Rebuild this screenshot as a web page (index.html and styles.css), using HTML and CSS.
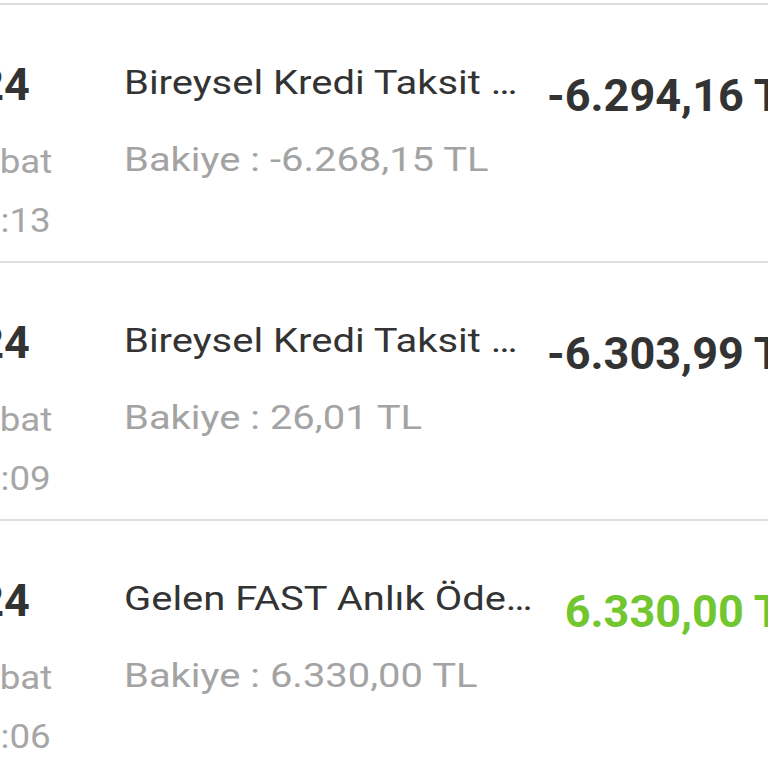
FILE: index.html
```html
<!DOCTYPE html>
<html lang="tr">
<head>
<meta charset="utf-8">
<title>Hesap Hareketleri</title>
<link rel="stylesheet" href="styles.css">
</head>
<body>
<div class="list">
  <div class="row">
    <div class="date">
      <div class="day">24</div>
      <div class="month">Şubat</div>
      <div class="time">15:13</div>
    </div>
    <div class="main">
      <div class="title">Bireysel Kredi Taksit …</div>
      <div class="balance">Bakiye : -6.268,15 TL</div>
    </div>
    <div class="amount">-6.294,16 TL</div>
  </div>
  <div class="row">
    <div class="date">
      <div class="day">24</div>
      <div class="month">Şubat</div>
      <div class="time">15:09</div>
    </div>
    <div class="main">
      <div class="title">Bireysel Kredi Taksit …</div>
      <div class="balance">Bakiye : 26,01 TL</div>
    </div>
    <div class="amount">-6.303,99 TL</div>
  </div>
  <div class="row">
    <div class="date">
      <div class="day">24</div>
      <div class="month">Şubat</div>
      <div class="time">15:06</div>
    </div>
    <div class="main">
      <div class="title">Gelen FAST Anlık Öde…</div>
      <div class="balance">Bakiye : 6.330,00 TL</div>
    </div>
    <div class="amount positive">6.330,00 TL</div>
  </div>
</div>
</body>
</html>
```
FILE: styles.css
```css
html, body {
  margin: 0;
  padding: 0;
  background: #ffffff;
  overflow: hidden;
}
body {
  font-family: Roboto, "Noto Sans", "Liberation Sans", sans-serif;
  width: 768px;
  height: 768px;
}
.list {
  margin-top: 3px;
}
.row {
  display: flex;
  align-items: flex-start;
  height: 256px;
  border-top: 2px solid #dedede;
  white-space: nowrap;
}
.date {
  flex: none;
  width: 120px;
  margin-left: -55px;
  padding-top: 52px;
  text-align: center;
  display: flex;
  flex-direction: column;
}
.day {
  font-size: 45px;
  font-weight: 700;
  line-height: 56px;
  color: #333333;
  margin-right: 2px;
}
.month, .time {
  font-size: 34px;
  line-height: 40px;
  color: #a6a6a6;
  transform: scaleX(1.08);
}
.month {
  margin-top: 28px;
}
.time {
  margin-top: 19px;
}
.main {
  flex: none;
  width: 406px;
  margin-left: 59px;
  padding-top: 57px;
  display: flex;
  flex-direction: column;
  gap: 37px;
}
.title,
.balance {
  font-size: 34px;
  line-height: 40px;
  transform: scaleX(1.175);
  transform-origin: 0 50%;
}
.title {
  color: #333333;
}
.balance {
  color: #a3a3a3;
}
.amount {
  flex: none;
  width: 250px;
  margin-left: 17px;
  padding-top: 63px;
  font-size: 45px;
  font-weight: 700;
  line-height: 56px;
  color: #333333;
  text-align: right;
}
.amount.positive {
  margin-left: 26px;
  color: #72c62f;
}
```
